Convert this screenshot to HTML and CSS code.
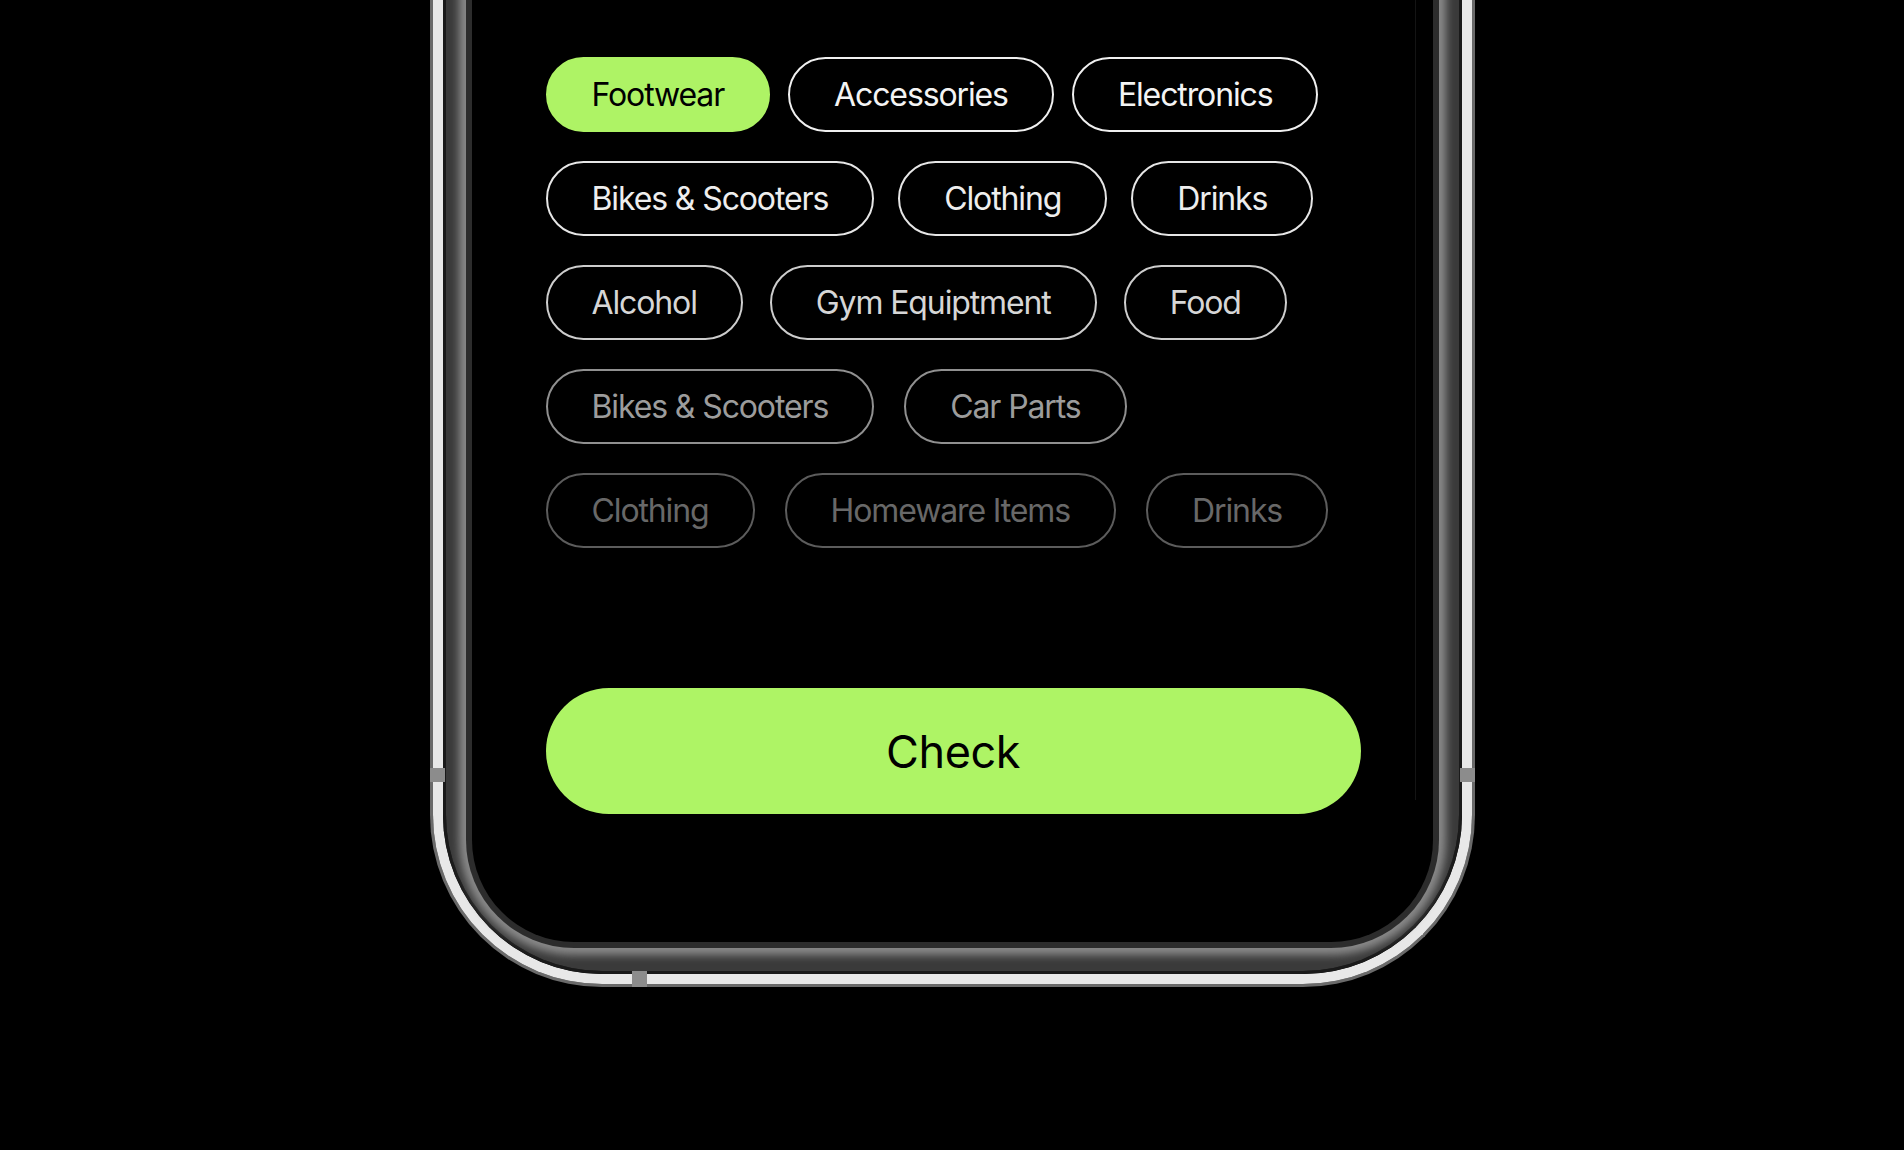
FILE: index.html
```html
<!DOCTYPE html>
<html>
  <head>
    <meta charset="utf-8">

    <title>Pick a category</title>

    <link rel="stylesheet" href="styles.css">
  </head>

  <body>
    <div class="phone">
      <span class="notch notch-left"></span>
      <span class="notch notch-right"></span>
      <span class="notch notch-bottom"></span>
      <div class="rim">
        <div class="seam">
          <div class="bezel">
            <div class="screen">
              <div class="tags">
                <div class="row row-1">
                  <button class="tag tag-active">Footwear</button>
                  <button class="tag">Accessories</button>
                  <button class="tag">Electronics</button>
                </div>
                <div class="row row-2">
                  <button class="tag">Bikes &amp; Scooters</button>
                  <button class="tag">Clothing</button>
                  <button class="tag">Drinks</button>
                </div>
                <div class="row row-3">
                  <button class="tag">Alcohol</button>
                  <button class="tag">Gym Equiptment</button>
                  <button class="tag">Food</button>
                </div>
                <div class="row row-4">
                  <button class="tag">Bikes &amp; Scooters</button>
                  <button class="tag">Car Parts</button>
                </div>
                <div class="row row-5">
                  <button class="tag">Clothing</button>
                  <button class="tag">Homeware Items</button>
                  <button class="tag">Drinks</button>
                </div>
              </div>
              <button class="check">Check</button>
            </div>
          </div>
        </div>
      </div>
    </div>
  </body>
</html>
```

FILE: styles.css
```css
html {
  font-family: "Inter", "Liberation Sans", sans-serif;
}

body {
  margin: 0;
  height: 1150px;
  overflow: hidden;
  background-color: #000;
}

/* phone frame, cut off at the top */
.phone {
  position: relative;
  width: 1045px;
  margin: 0 auto;
  box-sizing: border-box;
  border: 3px solid #6a6a6a;
  border-top: 0;
  border-radius: 0 0 172px 172px;
}

.rim {
  border: 10px solid #e8e8e8;
  border-top: 0;
  border-radius: 0 0 169px 169px;
}

.seam {
  border: 3px solid #1a1a1a;
  border-top: 0;
  border-radius: 0 0 159px 159px;
}

.bezel {
  padding: 0 26px 29px;
  background-color: #3a3a3a;
  border-radius: 0 0 156px 156px;
}

.screen {
  position: relative;
  height: 942px;
  box-sizing: border-box;
  padding: 57px 0 0 74px;
  background-color: #000;
  border-radius: 0 0 102px 102px;
  box-shadow: 0 0 0 6px #2c2c2c, 0 0 9px 13px #8a8a8a;
}

/* faint glass reflection along the right edge */
.screen::after {
  content: "";
  position: absolute;
  top: 0;
  right: 17px;
  width: 1px;
  height: 800px;
  background-color: rgba(255, 255, 255, 0.08);
}

.notch {
  position: absolute;
  background-color: #8c8c8c;
}

.notch-left {
  left: -3px;
  top: 768px;
  width: 15px;
  height: 14px;
}

.notch-right {
  right: -3px;
  top: 768px;
  width: 15px;
  height: 14px;
}

.notch-bottom {
  left: 199px;
  bottom: -3px;
  width: 15px;
  height: 16px;
}

/* category tags */
.tags {
  display: flex;
  flex-direction: column;
  gap: 29px;
}

.row {
  display: flex;
}

.tag {
  height: 75px;
  box-sizing: border-box;
  padding: 0 44px;
  border: 2px solid #f0f0f0;
  border-radius: 38px;
  background: none;
  color: #f4f4f4;
  font-family: inherit;
  font-size: 32px;
  letter-spacing: -0.035em;
  white-space: nowrap;
}

.tag-active {
  border-color: #aef365;
  background-color: #aef365;
  color: #000;
}

.row-1 { gap: 18px; }
.row-2 { gap: 24px; }
.row-3 { gap: 27px; }
.row-4 { gap: 30px; }
.row-5 { gap: 30px; }

.row-2 .tag { border-color: #e6e6e6; color: #eeeeee; }
.row-3 .tag { border-color: #cdcdcd; color: #d6d6d6; }
.row-4 .tag { border-color: #909090; color: #9c9c9c; }
.row-5 .tag { border-color: #5c5c5c; color: #686868; }

.check {
  display: block;
  width: 815px;
  height: 126px;
  margin-top: 140px;
  border: none;
  border-radius: 63px;
  background-color: #aef465;
  color: #000;
  font-family: inherit;
  font-size: 45px;
  letter-spacing: -0.01em;
}
```
